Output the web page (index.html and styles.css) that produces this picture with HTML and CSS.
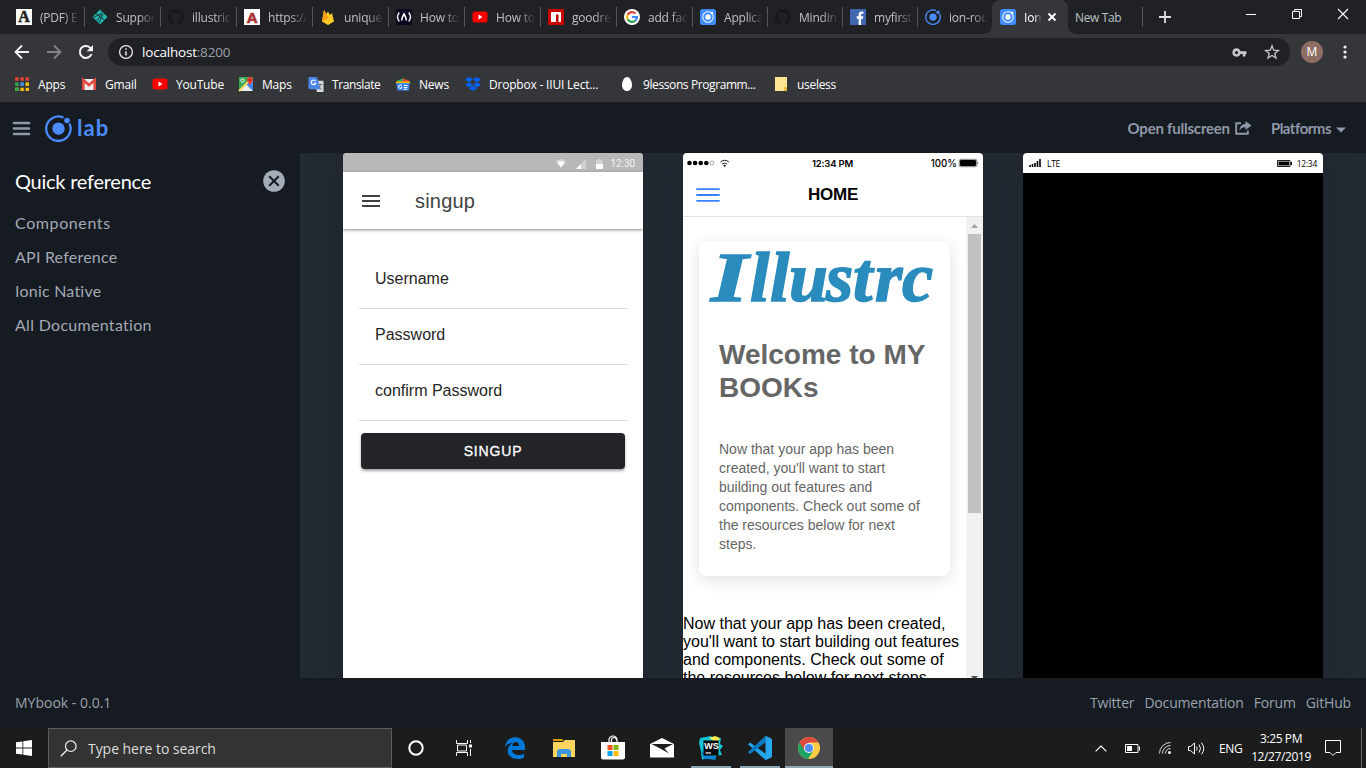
FILE: index.html
```html
<!DOCTYPE html>
<html lang="en">
<head>
<meta charset="utf-8">
<title>Ionic Lab</title>
<link rel="stylesheet" href="styles.css">
</head>
<body>
<svg width="0" height="0" class="defs">
  <symbol id="github" viewBox="0 0 16 16"><path fill="#15171a" d="M8 0a8 8 0 0 0-2.5 15.6c.4.1.5-.2.5-.4v-1.4c-2.200.5-2.700-1-2.700-1-.4-.9-.9-1.200-.9-1.200-.7-.5.1-.5.1-.5.8.1 1.200.8 1.200.8.7 1.300 1.900.9 2.300.7.1-.5.3-.9.5-1.100-1.800-.2-3.600-.9-3.600-4 0-.9.300-1.600.8-2.100-.1-.2-.4-1 .1-2.100 0 0 .7-.2 2.200.8a7.600 7.600 0 0 1 4 0c1.500-1 2.200-.8 2.200-.8.4 1.100.2 1.900.1 2.100.5.6.8 1.300.8 2.100 0 3.100-1.900 3.700-3.700 3.900.3.3.6.8.6 1.500v2.200c0 .2.1.5.6.4A8 8 0 0 0 8 0z"/></symbol>
  <symbol id="youtube" viewBox="0 0 16 16"><rect y="2.500" x=".5" width="15" height="11" rx="2.500" fill="#f00"/><path d="M6.500 5.600v4.800L10.500 8z" fill="#fff"/></symbol>
  <symbol id="ionic-app" viewBox="0 0 16 16"><rect width="16" height="16" rx="2.500" fill="#3f8cff"/><circle cx="8" cy="8" r="5.300" fill="none" stroke="#cfe2ff" stroke-width="1.300"/><circle cx="8" cy="8" r="2.700" fill="#fff"/><circle cx="12" cy="4" r="1.200" fill="#fff"/></symbol>
  <symbol id="ionic" viewBox="0 0 27 27"><path d="M18.500 2.600A12.200 12.200 0 1 0 24.500 8.600" fill="none" stroke="#4a8bfc" stroke-width="2.300"/><circle cx="13.500" cy="13.700" r="6.200" fill="#4a8bfc"/><circle cx="22" cy="5.500" r="2.800" fill="#4a8bfc"/></symbol>
</svg>

<header class="browser">
  <div class="tabs">
    <div class="tab"><svg viewBox="0 0 16 16"><rect width="16" height="16" fill="#fff"/><text x="8" y="13.300" class="fav-serif">A</text></svg><span>(PDF) E</span></div>
    <div class="tab"><svg viewBox="0 0 16 16"><path d="M8 .5 15.500 8 8 15.500.5 8z" fill="#20b2aa"/><path d="M4 4.500 12.500 11M1 8.500l9-4M5 12.500l5-9M7 14l4-9" stroke="#202124" stroke-width=".8"/></svg><span>Suppor</span></div>
    <div class="tab"><svg><use href="#github"/></svg><span>illustric</span></div>
    <div class="tab"><svg viewBox="0 0 16 16"><rect width="16" height="16" fill="#fff"/><text x="8" y="13.500" class="fav-sans">A</text></svg><span>https://</span></div>
    <div class="tab"><svg viewBox="0 0 16 16"><path d="M2 12.500 4 1l2.300 4L8 2.500 10 6l2-2 2 8.500L8 16z" fill="#ffc928"/><path d="M2 12.500 4 1l4.500 8z" fill="#ff9c15"/></svg><span>unique</span></div>
    <div class="tab"><svg viewBox="0 0 16 16"><rect width="16" height="16" fill="#0a0a23"/><path d="M3.200 3.500Q-.2 8 3.200 12.500M12.800 3.500q3.400 4.500 0 9" fill="none" stroke="#fff" stroke-width="1.400"/><path d="M5.700 11.500Q5.500 9 8 5q2.500 4 2.300 6.500" fill="none" stroke="#fff" stroke-width="1.600"/></svg><span>How to</span></div>
    <div class="tab"><svg><use href="#youtube"/></svg><span>How to</span></div>
    <div class="tab"><svg viewBox="0 0 16 16"><rect width="16" height="16" fill="#cb0000"/><path d="M3 3h10v10h-2.500V5.500H8V13H3z" fill="#fff"/></svg><span>goodre</span></div>
    <div class="tab"><svg viewBox="0 0 16 16"><circle cx="8" cy="8" r="8" fill="#fff"/><g fill="none" stroke-width="2.200"><path d="M11.500 4.500A5 5 0 0 0 3.600 5.700" stroke="#ea4335"/><path d="M3.600 5.700a5 5 0 0 0 0 4.600" stroke="#fbbc05"/><path d="M3.600 10.300a5 5 0 0 0 7.700 1.400" stroke="#34a853"/><path d="M11.300 11.700A5 5 0 0 0 13 8H8" stroke="#4285f4"/></g></svg><span>add fac</span></div>
    <div class="tab narrow"><svg><use href="#ionic-app"/></svg><span>Applica</span></div>
    <div class="tab narrow"><svg><use href="#github"/></svg><span>Mindin</span></div>
    <div class="tab narrow"><svg viewBox="0 0 16 16"><rect width="16" height="16" fill="#4267b2"/><path d="M8.600 16V9.700H6.700V7.300h1.900V5.600c0-2 1.200-3.100 3-3.100h1.800v2.200h-1.200c-.9 0-1.100.5-1.100 1.100v1.500h2.200L13 9.700h-1.900V16z" fill="#fff"/></svg><span>myfirst</span></div>
    <div class="tab narrow bare"><svg><use href="#ionic"/></svg><span>ion-rou</span></div>
    <div class="tab active"><svg><use href="#ionic-app"/></svg><span>Ion</span><svg class="close" viewBox="0 0 10 10"><path d="m1.500 1.500 7 7m0-7-7 7" stroke="#fff" stroke-width="1.900"/></svg></div>
    <div class="tab newtab"><span>New Tab</span></div>
    <svg class="plus" viewBox="0 0 12 12"><path d="M6 0v12M0 6h12" stroke="#dee1e6" stroke-width="1.800"/></svg>
    <div class="window-controls">
      <svg viewBox="0 0 12 12"><path d="M1 6.500h10" stroke="#fff"/></svg>
      <svg viewBox="0 0 12 12"><path d="M1.500 3.500h7v7h-7zM3.500 3.500v-2h7v7h-2" fill="none" stroke="#fff"/></svg>
      <svg viewBox="0 0 12 12"><path d="m1 1 10 10m0-10L1 11" stroke="#fff" stroke-width="1.100"/></svg>
    </div>
  </div>
  <div class="toolbar">
    <svg class="nav" viewBox="0 0 16 16"><path d="M15 8H2M8 1.500 1.500 8 8 14.500" fill="none" stroke="#f1f3f4" stroke-width="1.800"/></svg>
    <svg class="nav" viewBox="0 0 16 16"><path d="M1 8h13M8 1.500 14.500 8 8 14.500" fill="none" stroke="#808387" stroke-width="1.800"/></svg>
    <svg class="nav" viewBox="0 0 16 16"><path d="M13.500 10A6 6 0 1 1 12 3.600L13.500 5" fill="none" stroke="#f1f3f4" stroke-width="2"/><path d="M15 1v6.300H8.700z" fill="#f1f3f4"/></svg>
    <div class="omnibox">
      <svg viewBox="0 0 16 16" width="16" height="16"><circle cx="8" cy="8" r="6.400" fill="none" stroke="#e8eaed" stroke-width="1.300"/><path d="M8 7.200v4.300M8 4.300v1.500" stroke="#e8eaed" stroke-width="1.500"/></svg>
      <span class="url">localhost<i>:8200</i></span>
      <svg class="key" viewBox="0 0 14 9" width="15" height="9"><path fill="#c4c7cb" fill-rule="evenodd" d="M4 .3a4.200 4.200 0 0 1 4 2.900h6v2.800h-1v2.500h-2.700V6H8A4.200 4.200 0 1 1 4 .3zM4 3a1.600 1.600 0 1 0 0 3.200A1.600 1.600 0 0 0 4 3z"/></svg>
      <svg viewBox="0 0 16 16" width="16" height="16"><path fill="none" stroke="#c4c7cb" stroke-width="1.300" d="m8 1.800 1.700 4.400 4.700.3-3.600 3 1.200 4.600-4-2.600-4 2.600 1.200-4.600-3.600-3 4.700-.3z"/></svg>
    </div>
    <div class="avatar">M</div>
    <svg class="dots" viewBox="0 0 4 14"><g fill="#f1f3f4"><circle cx="2" cy="2" r="1.600"/><circle cx="2" cy="7" r="1.600"/><circle cx="2" cy="12" r="1.600"/></g></svg>
  </div>
  <nav class="bookmarks">
    <a class="b-apps"><svg viewBox="0 0 14 14"><g stroke-width="3.400" stroke-dasharray="3.400 1.800"><path d="M.2 2h14" stroke="#ea4335"/><path d="M.2 7.200h14" stroke="#34a853"/><path d="M.2 12.400h14" stroke="#fbbc05"/><path d="M5.400 7.200h3.400" stroke="#4285f4"/><path d="M10.600 7.200H14" stroke="#fbbc05"/><path d="M.2 12.400h3.400" stroke="#34a853"/></g></svg>Apps</a>
    <a class="b-gmail"><svg viewBox="0 0 14 14"><path d="M0 2h14v11H0z" fill="#eee"/><path d="M1.300 13V3L7 8l5.700-5v10" fill="none" stroke="#e04a3f" stroke-width="2.600"/></svg>Gmail</a>
    <a class="b-youtube"><svg><use href="#youtube"/></svg>YouTube</a>
    <a class="b-maps"><svg viewBox="0 0 14 14"><path d="M0 0h14v14H0z" fill="#34a853"/><path d="m0 14 7-7 7 7z" fill="#eee"/><path d="m7 7 7 7V3z" fill="#4285f4"/><path d="M0 14 12 2" stroke="#fdd663" stroke-width="2"/><path d="M11 0a3 3 0 0 0-3 3c0 2 2.500 3 3 6 .5-3 3-4 3-6a3 3 0 0 0-3-3" fill="#ea4335"/><circle cx="11" cy="3" r="1" fill="#901c14"/><circle cx="3.500" cy="3.500" r="1.700" fill="none" stroke="#fff"/></svg>Maps</a>
    <a class="b-translate"><svg viewBox="0 0 16 16"><path d="M6 4h10v12H9z" fill="#d6d8db"/><path d="M0 0h9l4 13H1.500A1.500 1.500 0 0 1 0 11.500z" fill="#4b86ec"/><path d="M7.500 4.200a2.500 2.500 0 1 0 .3 2.500H5.500" fill="none" stroke="#fff" stroke-width="1.200"/><path d="M10 8h5M12.500 7v1.500c0 2-1 3.500-2.500 4.500m1-3 3 3.500" stroke="#697a88" fill="none"/></svg>Translate</a>
    <a class="b-news"><svg viewBox="0 0 14 14"><path d="M1 3.500 8 1l2 5H2z" fill="#34a853"/><path d="m7 1.500 6 2-1 4H6z" fill="#ea4335"/><path d="M0 4.500h14v2H0z" fill="#fbbc05"/><path d="M.5 6h13l-.7 7.500H1.200z" fill="#4285f4"/><path d="M5.700 8.700a1.700 1.700 0 1 0 .3 1.600H4.700M8 8.500h3.500M8 10.500h3.500M8 12.300h3" fill="none" stroke="#fff"/></svg>News</a>
    <a class="b-dropbox"><svg viewBox="0 0 16 14"><path fill="#0061ff" d="m4 0 4 2.600-4 2.600L0 2.600zm8 0 4 2.600-4 2.600-4-2.600zM4 5.200l4 2.600-4 2.600-4-2.600zm8 0 4 2.600-4 2.600-4-2.600zM8 8.800l4 2.600L8 14l-4-2.600z"/></svg>Dropbox - IIUI Lect...</a>
    <a class="b-lessons"><svg viewBox="0 0 12 14"><path d="M6 0c3 0 5 4.500 5 8s-2 6-5 6-5-2.500-5-6 2-8 5-8" fill="#fff"/></svg>9lessons Programm...</a>
    <a class="b-useless"><svg viewBox="0 0 12 14"><path d="M0 0h12v14H0z" fill="#ffe592"/><path d="M9 10h3v4H9z" fill="#e8bd3c"/></svg>useless</a>
  </nav>
</header>

<section class="lab">
  <header class="lab-header">
    <svg class="burger" viewBox="0 0 17 15"><path d="M1 2h15M1 7.500h15M1 13h15" stroke="#8f98a8" stroke-width="2.700" stroke-linecap="round"/></svg>
    <svg class="ionic-logo"><use href="#ionic"/></svg>
    <span class="lab-word">lab</span>
    <div class="lab-actions">
      <a class="open">Open fullscreen</a>
      <svg class="share" viewBox="0 0 17 14"><path d="M6 2.200H1.200v10.600h11.600V9.500" fill="none" stroke="#8f98a8" stroke-width="1.900"/><path d="M10.500 0 16.500 4.500l-6 4.500V6.300C7.500 6.200 6 7 4.500 10c0-4 2-7 6-7.300z" fill="#8f98a8"/></svg>
      <a class="platforms">Platforms</a>
      <svg class="caret" viewBox="0 0 10 6"><path d="M0 .5h10l-5 5z" fill="#8f98a8"/></svg>
    </div>
  </header>
  <div class="lab-body">
    <aside class="sidebar">
      <div class="sidebar-head"><h2>Quick reference</h2><svg viewBox="0 0 22 22"><circle cx="11" cy="11" r="10.800" fill="#a5abb7"/><path d="m6.200 6.200 9.600 9.600m0-9.600-9.600 9.600" stroke="#161a21" stroke-width="2"/></svg></div>
      <a class="l1">Components</a><a class="l2">API Reference</a><a class="l3">Ionic Native</a><a class="l4">All Documentation</a>
    </aside>
    <main class="devices">
      <article class="phone android">
        <div class="status"><svg class="wifi" viewBox="0 0 10 9"><path d="M0 2Q5-2 10 2L5 9z" fill="#d0d0d0"/><path d="M1 3.200q4-2 8 0L5 8.500z" fill="#fff"/></svg><svg class="signal" viewBox="0 0 10 10"><path d="M10 0v10H0z" fill="#d1d1d1"/><path d="M5 5v5H0z" fill="#fff"/></svg><svg class="cell" viewBox="0 0 7 10"><path d="M0 1.500h2V0h3v1.500h2V10H0z" fill="#d2d2d2"/><path d="M0 5h7v5H0z" fill="#fff"/></svg><span>12:30</span></div>
        <div class="appbar"><svg viewBox="0 0 18 12"><path d="M0 1h18M0 6h18M0 11h18" stroke="#424242" stroke-width="2"/></svg><h3>singup</h3></div>
        <form class="fields"><label>Username</label><label>Password</label><label>confirm Password</label><button type="button">SINGUP</button></form>
      </article>
      <article class="phone ios">
        <div class="status"><svg class="carrier" viewBox="0 0 43 8"><g><circle cx="2.500" cy="4" r="2.300"/><circle cx="8.100" cy="4" r="2.300"/><circle cx="13.700" cy="4" r="2.300"/><circle cx="19.300" cy="4" r="2.300"/><circle cx="24.900" cy="4" r="2" fill="none" stroke="#555" stroke-width=".5"/></g><path d="M33.500 3q4.200-3.500 8.400 0M35 5q2.600-2 5.200 0" fill="none" stroke="#222" stroke-width="1"/><circle cx="37.600" cy="6.700" r="1"/></svg><b>12:34 PM</b><span>100%</span><svg class="battery" viewBox="0 0 20 8"><rect x=".3" y=".3" width="17.500" height="7.400" rx="1.500" fill="none" stroke="#222" stroke-width=".6"/><rect x="1" y="1" width="16" height="6" rx="1"/><path d="M18.500 2.500q1.500 1.500 0 3"/></svg></div>
        <div class="appbar"><svg viewBox="0 0 24 14"><path d="M1 1.200h22M1 7h22M1 12.800h22" stroke="#3880ff" stroke-width="1.800" stroke-linecap="round"/></svg><h3>HOME</h3></div>
        <div class="scroll-area">
          <div class="content">
            <div class="card">
              <svg class="masthead" viewBox="0 0 224 60"><text y="54"><tspan x="4" textLength="37" lengthAdjust="spacingAndGlyphs">I</tspan><tspan x="43 63 82 119 146 168 195">llustrc</tspan></text></svg>
              <h1>Welcome to MY BOOKs</h1>
              <p>Now that your app has been<br>created, you'll want to start<br>building out features and<br>components. Check out some of<br>the resources below for next<br>steps.</p>
            </div>
            <p class="copy">Now that your app has been created,<br>you'll want to start building out features<br>and components. Check out some of<br>the resources below for next steps.</p>
          </div>
          <div class="scrollbar"><svg viewBox="0 0 7 4"><path d="M3.500 0 7 4H0z" fill="#a3a3a3"/></svg><div class="thumb"></div><svg class="down" viewBox="0 0 7 4"><path d="M0 0h7L3.500 4z" fill="#505050"/></svg></div>
        </div>
      </article>
      <article class="phone windows">
        <div class="status"><svg class="bars" viewBox="0 0 12 8"><path d="M1 6v2M3.500 5v3M6 4v4M8.500 2v6M11 0v8" stroke="#000" stroke-width="1.600"/></svg><span>LTE</span><svg class="battery" viewBox="0 0 15 7"><path d="M.5.5h12.500v6H.5z" fill="none" stroke="#222"/><path d="M1.500 1.500h10.500v4H1.500zM13.500 2H15v3h-1.500z"/></svg><span>12:34</span></div>
      </article>
    </main>
  </div>
  <footer class="lab-footer"><span>MYbook - 0.0.1</span><nav><a>Twitter</a><a>Documentation</a><a>Forum</a><a>GitHub</a></nav></footer>
</section>

<footer class="taskbar">
  <div class="start"><svg viewBox="0 0 16 16"><path fill="#fff" d="m0 2.300 6.500-.9v6.200H0zM7.300 1.200 16 0v7.600H7.300zM0 8.400h6.500v6.200L0 13.700zM7.300 8.400H16V16l-8.700-1.200z"/></svg></div>
  <div class="search"><svg viewBox="0 0 17 17"><circle cx="10.800" cy="6.200" r="5.300" fill="none" stroke="#eee" stroke-width="1.200"/><path d="M7 10 .8 16.200" stroke="#eee" stroke-width="1.300"/></svg><span>Type here to search</span></div>
  <div class="task cortana"><svg width="16" height="16" viewBox="0 0 16 16"><circle cx="8" cy="8" r="6.700" fill="none" stroke="#fff" stroke-width="2"/></svg></div>
  <div class="task views"><svg width="17" height="16" viewBox="0 0 17 16"><path d="M.5 0v3.500h11V0M.5 16v-3.500h11V16M1.500 5h9v6h-9zM14.500 0v3M14.500 9v7" fill="none" stroke="#fff"/><path d="M13 4.500h3v3h-3z" fill="#fff"/></svg></div>
  <div class="task"><svg width="22" height="22" viewBox="0 0 22 22"><path fill="#0078d7" fill-rule="evenodd" d="M1 10C2 3 6 .3 11 .3c6 0 10 4 10 9.500V13H8c.3 3.500 3.300 5 6.500 5 2 0 4-.5 5.500-1.500v4C18 21.600 16 22 13.500 22 7.500 22 3.700 18.500 3.700 14c0-3.500 2-6.500 5-8C5.500 6 2.800 7.500 1 10m7.300-1H15c0-2.500-1.200-4-3.200-4S8.500 7 8.300 9z"/></svg></div>
  <div class="task"><svg width="22" height="18" viewBox="0 0 22 18"><path d="M0 0h9l2 2H0z" fill="#d89a00"/><path d="M0 3h10l2-2h10v17H0z" fill="#ffd45e"/><path d="M4 18v-6l2-2h10l2 2v6h-4v-3H8v3z" fill="#3b97dc"/></svg></div>
  <div class="task"><svg width="24" height="24" viewBox="0 0 24 24"><path d="M8 6V4a4 4 0 0 1 8 0v2M10.500 6V4a2.500 2.500 0 0 1 5 0" fill="none" stroke="#fff" stroke-width="1.200"/><path d="M0 6h24v15.500a2 2 0 0 1-2 2H2a2 2 0 0 1-2-2z" fill="#fff"/><path d="M6.500 9h5v5h-5z" fill="#f25022"/><path d="M12.500 9h5v5h-5z" fill="#7fba00"/><path d="M6.500 15h5v5h-5z" fill="#00a4ef"/><path d="M12.500 15h5v5h-5z" fill="#ffb900"/></svg></div>
  <div class="task"><svg width="24" height="20" viewBox="0 0 24 20"><path d="M0 6 12 0l12 6v13.500H0z" fill="#fff"/><path d="M1.500 6H23l-8.500 4.500 4.500 5-7-4z" fill="#1c1c1c"/></svg></div>
  <div class="task running"><svg width="24" height="24" viewBox="0 0 24 24"><path d="M1 2 12 0l3 3 7-1-1 6 3 2-3 4 2 5-6 .500-1 4-9-1-4 1-1-8L0 7z" fill="#13c4d8"/><path d="m10 2 6-2 5 2-3 5z" fill="#f4ee51"/><path d="m2 15 3 8 12 .500-1-3z" fill="#0785d9"/><path d="M4.500 4.500h15v15h-15z" fill="#080808"/><text x="5.200" y="13" class="ws">WS</text><path d="M6.500 17h5.500" stroke="#fff" stroke-width="1.200"/></svg></div>
  <div class="task running"><svg width="24" height="24" viewBox="0 0 24 24"><path d="M17.500 0 24 3v18l-6.500 3L2.500 10.500 0 8.500l2-2 16 11.500V6z" fill="#23a3ec"/><path d="M17.500 0v6.500L2 18l-2-2z" fill="#0878bf"/><path d="m17.500 0 6.500 3v18l-6.500 3z" fill="#27a7ef"/></svg></div>
  <div class="task running current"><svg width="22" height="22" viewBox="0 0 22 22"><circle cx="11" cy="11" r="11" fill="#ffcd42"/><path d="M11 11 1.500 5.500A11 11 0 0 0 10 22l5.500-8.500z" fill="#1ea362"/><path d="M1.500 5.500A11 11 0 0 1 20.500 5.500H11L6.500 13.500z" fill="#dd4b3e"/><circle cx="11" cy="11" r="5" fill="#f5f5f5"/><circle cx="11" cy="11" r="4" fill="#4f8df5"/></svg></div>
  <div class="tray">
    <svg class="chev" viewBox="0 0 12 7"><path d="m.6 6.400 5.400-5.400 5.400 5.400" fill="none" stroke="#fff" stroke-width="1.200"/></svg>
    <svg class="power" viewBox="0 0 15 9"><path d="M.5.500h12.500v8H.5zM14.500 2.500v4" fill="none" stroke="#fff"/><path d="M2 2h5v5H2z" fill="#fff"/></svg>
    <svg class="net" viewBox="0 0 12 12"><g fill="none" stroke="#ddd"><path d="M.5 11.500A11 11 0 0 1 11.500.500M3.500 11.500a8 8 0 0 1 8-8M6.500 11.500a5 5 0 0 1 5-5"/></g><circle cx="10.500" cy="10.500" r="1.500" fill="#fff"/></svg>
    <svg class="sound" viewBox="0 0 17 13"><path d="M.5 4.500h2L6.500 1v11L2.500 8.500h-2zM8.500 4.500q1.500 2 0 4M11 2.500q3 4 0 8M13.500.7q4.500 5.800 0 11.600" fill="none" stroke="#fff"/></svg>
    <span class="lang">ENG</span>
    <div class="clock"><span>3:25 PM</span><span>12/27/2019</span></div>
    <svg class="notice" viewBox="0 0 16 16"><path d="M.5.500h15v12H11L8 15.500 5 12.500H.5z" fill="none" stroke="#fff"/></svg>
    <div class="desktop-edge"></div>
  </div>
</footer>
</body>
</html>
```
FILE: styles.css
```css
* { box-sizing: border-box; }
body { margin: 0; width: 1366px; height: 768px; overflow: hidden; background: #161a21; font-family: "Open Sans", "Noto Sans", sans-serif; display: flex; flex-direction: column; }
svg { display: block; flex: none; overflow: visible; }
h1, h2, h3, p { margin: 0; }
.defs { position: absolute; }

.browser { height: 103px; background: #35363a; border-bottom: 1px solid #202124; flex: none; }
.tabs { display: flex; height: 34px; background: #202124; padding-left: 9px; }
.tab { width: 76px; height: 34px; flex: none; display: flex; align-items: center; padding-left: 7px; position: relative; font-size: 12px; color: #bdc1c6; letter-spacing: -.2px; }
.tab.narrow { width: 75px; }
.tab.narrow.bare { width: 74px; }
.tab > svg { width: 16px; height: 16px; }
.tab span { margin-left: 8px; width: 38px; white-space: nowrap; -webkit-mask-image: linear-gradient(90deg, #000 60%, rgba(0, 0, 0, .1)); mask-image: linear-gradient(90deg, #000 60%, rgba(0, 0, 0, .1)); }
.tab::after { content: ""; position: absolute; right: 0; top: 7px; width: 1px; height: 20px; background: #54565a; }
.tab.bare::after, .tab.active::after { display: none; }
.tab.active { background: #35363a; border-radius: 8px 8px 0 0; color: #fff; padding-left: 8px; }
.tab.active span { width: 17px; }
.tab.active::before { content: ""; position: absolute; left: -8px; right: -8px; bottom: 0; height: 8px; background: radial-gradient(circle at 0 0, transparent 7.5px, #35363a 8px) left / 8px 8px no-repeat, radial-gradient(circle at 100% 0, transparent 7.5px, #35363a 8px) right / 8px 8px no-repeat; }
.tab > .close { width: 10px; height: 10px; margin-left: 6px; }
.newtab { width: 75px; }
.newtab span { margin-left: 0; width: 60px; -webkit-mask: none; mask: none; letter-spacing: -.35px; }
.plus { width: 12px; height: 12px; margin: 11px 0 0 16px; }
.window-controls { margin: 8px 17px 0 auto; display: flex; gap: 34px; }
.window-controls svg { width: 12px; height: 12px; }
.fav-serif { font: bold 16px "Liberation Serif", serif; text-anchor: middle; fill: #222; stroke: #222; stroke-width: .5; }
.fav-sans { font: bold 15px "Liberation Sans", sans-serif; text-anchor: middle; fill: #a82f35; stroke: #a82f35; stroke-width: .7; }

.toolbar { display: flex; align-items: center; height: 36px; padding-left: 14px; }
.nav { width: 16px; height: 16px; margin-right: 16px; }
.omnibox { width: 1182px; height: 28px; margin-left: -2px; background: #202124; border-radius: 14px; display: flex; align-items: center; padding: 0 10px; }
.url { margin: 0 auto 0 8px; font-size: 13.500px; color: #fff; letter-spacing: -.2px; }
.url i { color: #9aa0a6; font-style: normal; }
.key { margin-right: 17px; }
.avatar { width: 22px; height: 22px; margin-left: 11px; border-radius: 50%; background: #8d6e63; color: #fff; font-size: 12px; line-height: 22px; text-align: center; }
.dots { width: 4px; height: 14px; margin-left: 20px; }
.bookmarks { display: flex; height: 28px; padding-left: 15px; color: #fff; font-size: 12px; letter-spacing: -.2px; white-space: nowrap; }
.bookmarks a { display: flex; align-items: center; flex: none; }
.bookmarks svg { height: 14px; width: 14px; margin-right: 9px; }
.b-apps { width: 67px; } .b-gmail { width: 70px; } .b-youtube { width: 87px; } .b-maps { width: 69px; } .b-translate { width: 88px; } .b-news { width: 69px; } .b-dropbox { width: 156px; } .b-lessons { width: 154px; }
.b-translate, .b-lessons { letter-spacing: -.4px; }
.bookmarks .b-youtube svg { width: 16px; height: 16px; margin-right: 8px; }
.bookmarks .b-translate svg { width: 16px; height: 15px; margin-right: 8px; }
.bookmarks .b-dropbox svg { width: 16px; margin-right: 8px; }
.bookmarks .b-lessons svg { width: 12px; margin-right: 10px; }
.bookmarks .b-useless svg { width: 12px; margin-right: 10px; }
.b-useless { letter-spacing: -.3px; }

.lab { height: 625px; flex: none; display: flex; flex-direction: column; font-family: Lato, sans-serif; color: #8f98a8; }
.lab-header { height: 50px; flex: none; display: flex; align-items: center; padding-left: 13px; }
.burger { width: 17px; height: 15px; }
.ionic-logo { width: 27px; height: 27px; margin-left: 15px; }
.lab-word { margin: -2px 0 0 5px; font-size: 22px; font-weight: 700; color: #4a8bfc; letter-spacing: 1px; }
.lab-actions { display: flex; align-items: center; margin-left: auto; padding-right: 20px; font-size: 15px; font-weight: 700; }
.open { letter-spacing: -.22px; }
.platforms { letter-spacing: -.5px; }
.share { width: 17px; height: 14px; margin: 0 19px 0 5px; }
.caret { width: 10px; height: 6px; margin: 3px 0 0 5px; }
.lab-body { height: 525px; display: flex; }
.sidebar { width: 300px; padding: 17px 15px 0; flex: none; display: flex; flex-direction: column; }
.sidebar-head { display: flex; justify-content: space-between; height: 36px; }
.sidebar-head svg { width: 22px; height: 22px; }
.sidebar h2 { color: #fff; font-size: 20px; font-weight: 400; line-height: 25px; letter-spacing: -.25px; margin-top: -1px; }
.sidebar a { height: 34px; line-height: 34px; font-size: 16px; color: #a2a9b4; }
.sidebar .l1 { letter-spacing: .6px; }
.sidebar .l2, .sidebar .l3 { letter-spacing: .22px; }
.sidebar .l4 { letter-spacing: .3px; }
.devices { flex: 1; display: flex; gap: 40px; padding-left: 43px; background: #242a32; overflow: hidden; }
.phone { width: 300px; height: 580px; flex: none; background: #fff; border-radius: 4px 4px 0 0; box-shadow: 0 0 30px rgba(15, 22, 40, .3); overflow: hidden; font-family: "Liberation Sans", Arial, sans-serif; color: #000; }
.status { display: flex; align-items: center; height: 20px; }

.android .status { height: 19px; background: #b8b8b8; justify-content: flex-end; padding: 2px 8px 0 0; color: #f4f4f4; font: 10px Roboto, sans-serif; letter-spacing: -.1px; }
.wifi { width: 10px; height: 9px; margin-right: 10px; }
.signal { width: 10px; height: 10px; margin-right: 10px; }
.cell { width: 7px; height: 10px; margin-right: 8px; }
.android .appbar { height: 57px; display: flex; align-items: center; padding-left: 19px; box-shadow: 0 1px 3px rgba(0, 0, 0, .45); }
.android .appbar svg { width: 18px; height: 12px; }
.android h3 { margin: 2px 0 0 35px; font-size: 20px; font-weight: 400; letter-spacing: .2px; color: #424242; }
.fields { padding: 24px 16px; display: flex; flex-direction: column; }
.fields label { height: 56px; border-bottom: 1px solid #dcdcdc; padding: 17px 16px 0; font-size: 16px; line-height: 18px; color: #262626; }
.fields button { height: 36px; margin: 12px 2px 0; border: 0; border-radius: 4px; background: #222428; color: #fff; font: 14px "Liberation Sans", Arial, sans-serif; letter-spacing: .84px; -webkit-text-stroke: .3px #fff; box-shadow: 0 2px 3px rgba(0, 0, 0, .35); }

.ios { display: flex; flex-direction: column; }
.ios .status { flex: none; font: 10px Inter, sans-serif; padding: 0 4px; }
.carrier { width: 43px; height: 8px; }
.ios .status b { margin-left: 82px; width: 50px; font-weight: 600; font-size: 9.500px; white-space: nowrap; letter-spacing: -.2px; }
.ios .status span { margin-left: auto; font-weight: 500; font-size: 9.700px; }
.ios .battery { width: 20px; height: 8px; margin-left: 2px; }
.ios .appbar { height: 44px; flex: none; display: grid; grid-template-columns: 40px 1fr 40px; align-items: center; border-bottom: 1px solid #e2e2e2; }
.ios .appbar svg { width: 24px; height: 14px; margin-left: 13px; }
.ios h3 { text-align: center; font-size: 17px; font-weight: 700; letter-spacing: -.2px; }
.scroll-area { display: flex; height: 461px; flex: none; overflow: hidden; }
.content { width: 283px; flex: none; padding-top: 24px; }
.card { width: 251px; height: 335px; margin-left: 16px; border-radius: 8px; box-shadow: 0 4px 16px rgba(0, 0, 0, .12); color: #666; padding: 6px 20px 0; }
.masthead { width: 224px; height: 60px; margin-left: -12px; }
.masthead text { font: italic bold 70px "Liberation Serif", serif; fill: #2a8bbd; stroke: #2a8bbd; stroke-width: 1.500; }
.card h1 { margin-top: 31px; font-size: 28px; line-height: 33px; }
.card p { margin-top: 36px; font-size: 14px; line-height: 19px; white-space: nowrap; }
.copy { margin-top: 39px; font-size: 16px; line-height: 18px; white-space: nowrap; }
.scrollbar { width: 17px; height: 461px; background: #f1f1f1; padding: 7px 2px 0; display: flex; flex-direction: column; align-items: center; }
.scrollbar svg { width: 7px; height: 4px; }
.thumb { width: 13px; height: 279px; margin: 6px 0 163px; background: #c1c1c1; flex: none; }

.windows { background: #000; }
.windows .status { background: #fff; padding: 0 6px; font: 8.500px "Open Sans", sans-serif; letter-spacing: -.3px; }
.bars { width: 12px; height: 8px; margin-right: 6px; }
.windows .battery { width: 15px; height: 7px; margin: 0 5px 0 auto; }

.lab-footer { height: 50px; display: flex; align-items: center; justify-content: space-between; padding: 0 15px 2px; font: 14px "Open Sans", sans-serif; color: #9aa2ae; }
.lab-footer nav { display: flex; gap: 10px; letter-spacing: -.17px; }

.taskbar { height: 40px; background: #1c1c1c; display: flex; flex: none; color: #fff; }
.start { width: 48px; display: grid; place-items: center; }
.start svg { width: 16px; height: 16px; }
.search { width: 344px; border: 1px solid #5c5c5c; background: #333; display: flex; align-items: center; padding-left: 11px; color: #ddd; font-size: 14px; letter-spacing: -.05px; }
.search svg { width: 17px; height: 17px; margin-right: 11px; }
.task { width: 49.100px; display: grid; place-items: center; position: relative; flex: none; }
.cortana, .views { padding-right: 2px; }
.running::after { content: ""; position: absolute; bottom: 0; left: 4px; right: 5px; height: 2px; background: #8da5b4; }
.current { background: #4a4a4a; width: 48px; }
.running.current::after { left: 0; right: 0; }
.ws { font: bold 9px "Liberation Sans", sans-serif; fill: #fff; }
.tray { display: flex; align-items: center; margin-left: auto; font-size: 12px; letter-spacing: -.4px; }
.chev { width: 12px; height: 7px; margin-right: 18px; }
.power { width: 15px; height: 9px; margin-right: 19px; }
.net { width: 12px; height: 12px; margin-right: 17px; }
.sound { width: 17px; height: 13px; margin-right: 14px; }
.lang { width: 24px; }
.clock { width: 58px; margin: 0 15px 0 9px; display: flex; flex-direction: column; align-items: center; line-height: 18px; white-space: nowrap; }
.notice { width: 16px; height: 16px; margin-right: 20px; }
.desktop-edge { width: 1px; height: 40px; background: #686868; margin-right: 4px; }
```
